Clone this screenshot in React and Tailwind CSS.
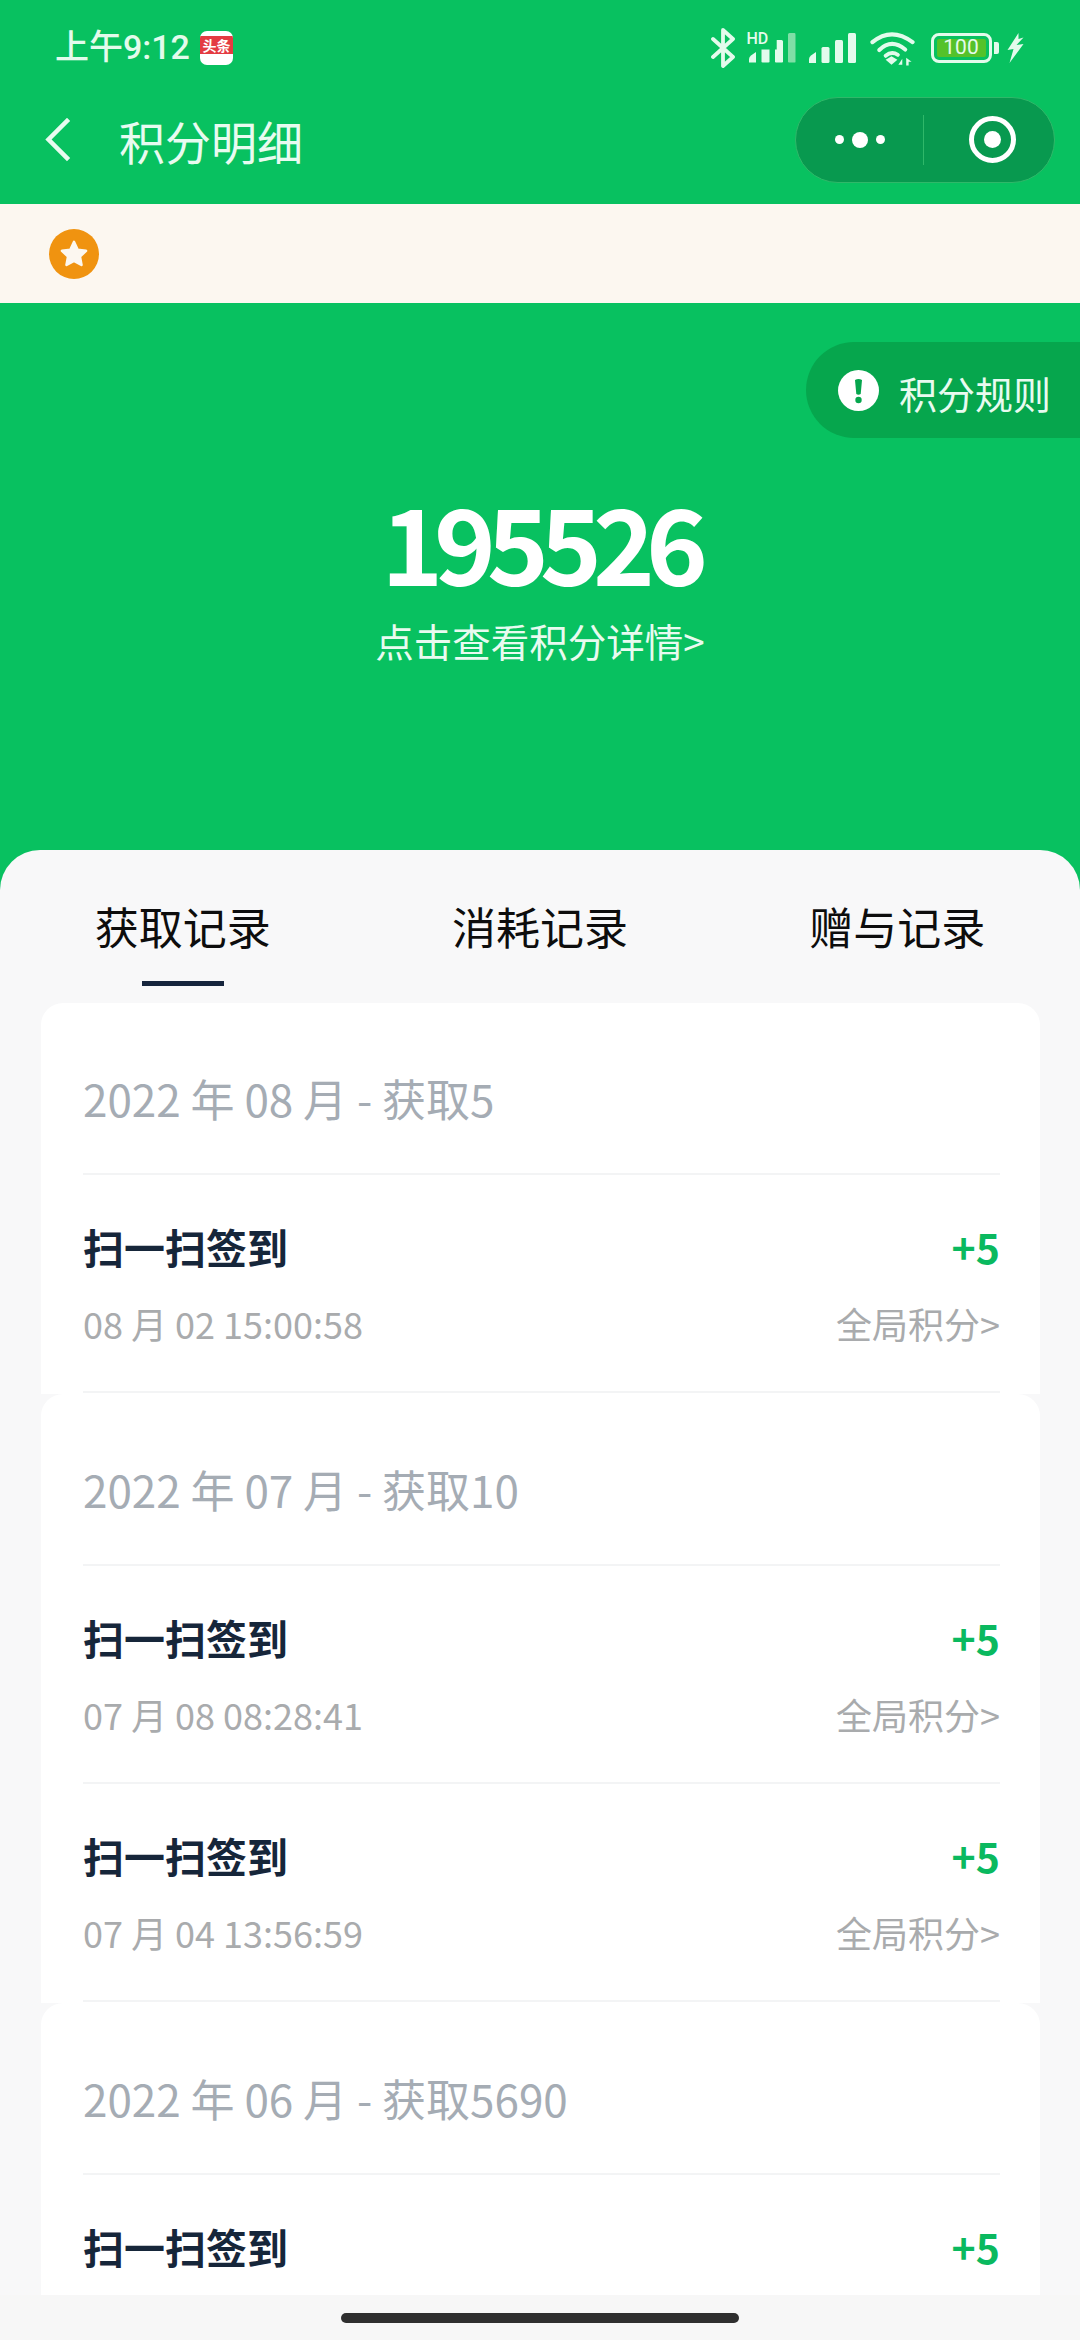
const CJK = "font-['Noto_Sans_CJK_SC','Noto_Sans',sans-serif]";

function Signal({ dim }) {
  return (
    <svg width="47" height="30" viewBox="0 0 47 30" className="block">
      <path d="M0 30v-4q0-2 2-3.500l5-3.500v11z" fill="#e3fbec" />
      <rect x="12.500" y="14" width="8" height="16" rx="1.500" fill="#e3fbec" />
      <rect x="26" y="7" width="8" height="23" rx="1.500" fill="#e3fbec" />
      <rect x="39" y="0" width="8" height="30" rx="1.500" fill={dim ? "#7fdfa6" : "#e3fbec"} />
    </svg>
  );
}

function StatusIcons() {
  return (
    <div className="flex items-center">
      <svg width="24" height="40" viewBox="0 0 24 40" fill="none" stroke="#e3fbec" strokeWidth="3.800" strokeLinecap="round" strokeLinejoin="round" className="mr-[14px]">
        <path d="M2 11l20 18-10 9V2l10 9L2 29" />
      </svg>
      <div className="relative mr-[13px] h-[30px] w-[47px]">
        <span className="absolute left-[-2px] top-[-1px] font-['Roboto',sans-serif] text-[16px] leading-[14px] font-medium text-[#e3fbec]">HD</span>
        <div className="absolute top-[0px] left-0 h-[30px] w-[47px] [clip-path:polygon(0_17px,60%_17px,60%_0,100%_0,100%_100%,0_100%)]">
          <Signal dim />
        </div>
      </div>
      <div className="mr-[14px]">
        <Signal />
      </div>
      <svg width="45" height="36" viewBox="0 0 46 36" fill="none" className="mr-[16px]">
        <path d="M2.500 12Q22-4 43.500 12" stroke="#e3fbec" strokeWidth="4.200" strokeLinecap="round" />
        <path d="M9.500 20Q22 8 36 19.500" stroke="#e3fbec" strokeWidth="4.200" strokeLinecap="round" />
        <path d="M16 26Q22 21 28.500 25" stroke="#e3fbec" strokeWidth="4" strokeLinecap="round" />
        <path d="M16 30l6-3.500 6 3.500-6 5z" fill="#e3fbec" />
        <path d="M33 35v-6l-4 6zM37 28v8h2.500v-4h3z" fill="#e3fbec" />
      </svg>
      <div className="relative flex h-[30px] w-[61px] items-center rounded-[8px] border-[3.500px] border-[#e3fbec] p-[3px]">
        <div className="h-full w-full rounded-[2px] bg-[#55c22a]" />
        <span className="absolute inset-0 flex items-center justify-center font-['Roboto',sans-serif] text-[21px] leading-none text-[#e3fbec]">100</span>
      </div>
      <div className="ml-[2.500px] mr-[8.500px] h-[12px] w-[4.500px] rounded-r-[2px] bg-[#e3fbec]" />
      <svg width="17" height="30" viewBox="0 0 16 30">
        <path d="M11 0L0 17l6-1-4 14L16 11l-7 1 7-7.500-5 1.500z" fill="#e3fbec" />
      </svg>
    </div>
  );
}

function Capsule() {
  return (
    <div className="flex h-[86px] w-[260px] items-center rounded-full border border-[#2fb869] bg-[#08994f]">
      <div className="flex flex-1 items-center justify-center gap-[8px]">
        <span className="size-[9px] rounded-full bg-white" />
        <span className="size-[16px] rounded-full bg-white" />
        <span className="size-[9px] rounded-full bg-white" />
      </div>
      <div className="h-[50px] w-px bg-[#2fb869]" />
      <div className="flex w-[130px] items-center justify-center pl-[6px]">
        <div className="flex size-[47px] items-center justify-center rounded-full border-[5px] border-white">
          <span className="size-[17px] rounded-full bg-white" />
        </div>
      </div>
    </div>
  );
}

function Row({ time }) {
  return (
    <div className="flex h-[218px] flex-col border-b-2 border-[#f3f4f5] pt-[38px]">
      <div className="flex items-center justify-between">
        <span className="text-[41px] leading-[66px] font-bold text-[#16263a]">扫一扫签到</span>
        <span className="text-[41px] leading-[66px] font-bold text-[#0ab95f]">+5</span>
      </div>
      {time && (
        <div className="mt-[16px] flex items-center justify-between">
          <span className="text-[36px] leading-[56px] text-[#a9abad]">{time}</span>
          <span className="text-[36px] leading-[56px] text-[#a9abad]">全局积分&gt;</span>
        </div>
      )}
    </div>
  );
}

function Card({ title, rows }) {
  return (
    <section className="rounded-t-[22px] bg-white pl-[42px] pr-[40px] pb-[1px]">
      <div className="flex h-[172px] items-center border-b-2 border-[#f3f4f5] pt-[20px] text-[44px] text-[#a5acb4]">
        <h2 className="font-normal">{title}</h2>
      </div>
      {rows.map((t, i) => (
        <Row key={i} time={t} />
      ))}
    </section>
  );
}

export default function App() {
  return (
    <div className={`flex h-[2340px] w-[1080px] flex-col overflow-hidden bg-[#08c160] ${CJK}`}>
      <header className="h-[204px] shrink-0 pl-[55px]">
        <div className="flex h-[95px] items-center justify-between pr-[56px]">
          <div className="flex items-center">
            <span className="font-['Roboto','Noto_Sans_CJK_SC',sans-serif] text-[34px] font-medium text-[#e3fbec]">上午9:12</span>
            <div className="ml-[10px] flex h-[34px] w-[33px] flex-col overflow-hidden rounded-[7px] bg-white pt-[5px]">
              <span className="flex h-[18px] w-full items-center justify-center bg-[#e43b42] text-[14px] leading-none font-bold text-white">头条</span>
            </div>
          </div>
          <StatusIcons />
        </div>
        <div className="flex h-[89px] items-center justify-between -ml-[10px] pr-[25px]">
          <div className="flex items-center">
            <svg width="26" height="47" viewBox="0 0 26 47" fill="none" stroke="#e8fbf0" strokeWidth="4.500" strokeLinecap="square">
              <path d="M22 5L3.500 23.500 22 42" />
            </svg>
            <span className="ml-[48px] text-[46px] leading-none text-[#e8fbf0]">积分明细</span>
          </div>
          <Capsule />
        </div>
      </header>

      <div className="flex h-[99px] shrink-0 items-center bg-[#fcf7f0] pl-[49px]">
        <div className="flex size-[50px] items-center justify-center rounded-full bg-[#f09310]">
          <svg width="32" height="32" viewBox="0 0 24 24" fill="#fcf7f0" stroke="#fcf7f0" strokeWidth="2" strokeLinejoin="round">
            <path d="M12 3l2.700 5.800 6.300.8-4.600 4.300 1.200 6.300L12 17.100 6.400 20.200l1.200-6.300L3 9.600l6.300-.8z" />
          </svg>
        </div>
      </div>

      <div className="relative h-[547px] shrink-0">
        <div className="absolute top-[39px] right-0 flex h-[96px] w-[274px] items-center rounded-l-[48px] bg-[#06a64d] pl-[32px]">
          <svg width="41" height="41" viewBox="0 0 41 41">
            <circle cx="20.500" cy="20.500" r="20.500" fill="#fff" />
            <path d="M17 10q3.500-2 7 0l-1.300 14q-2.200 1.500-4.400 0z" fill="#06a64d" />
            <circle cx="20.500" cy="30" r="3.200" fill="#06a64d" />
          </svg>
          <span className="mt-[5px] ml-[20px] text-[38px] leading-none text-[#e8fbf0]">积分规则</span>
        </div>
        <div className="flex flex-col items-center pt-[172px]">
          <div className="text-[105px] leading-[130px] font-bold tracking-[-9px] text-white">195526</div>
          <div className="mt-[7px] text-[38.500px] leading-[56px] text-[#e8fbf0]">点击查看积分详情&gt;</div>
        </div>
      </div>

      <main className="flex min-h-0 flex-1 flex-col overflow-hidden rounded-t-[40px] bg-[#f8f8f9]">
        <nav className="grid h-[153px] shrink-0 grid-cols-3 items-start px-[4px] pt-[46px] text-center">
          <div className="flex flex-col items-center">
            <span className="text-[44px] leading-[60px] text-[#0d0d0d]">获取记录</span>
            <span className="mt-[25px] h-[5px] w-[82px] bg-[#16253d]" />
          </div>
          <span className="text-[44px] leading-[60px] text-[#0d0d0d]">消耗记录</span>
          <span className="text-[44px] leading-[60px] text-[#0d0d0d]">赠与记录</span>
        </nav>
        <div className="min-h-0 flex-1 overflow-hidden pl-[41px] pr-[40px]">
          <Card title="2022 年 08 月 - 获取5" rows={["08 月 02 15:00:58"]} />
          <Card title="2022 年 07 月 - 获取10" rows={["07 月 08 08:28:41", "07 月 04 13:56:59"]} />
          <Card title="2022 年 06 月 - 获取5690" rows={[null]} />
        </div>
        <div className="flex h-[45px] shrink-0 items-start justify-center bg-[#f7f7f7] pt-[18px]">
          <div className="h-[10px] w-[398px] rounded-full bg-[#2f2f2f]" />
        </div>
      </main>
    </div>
  );
}
